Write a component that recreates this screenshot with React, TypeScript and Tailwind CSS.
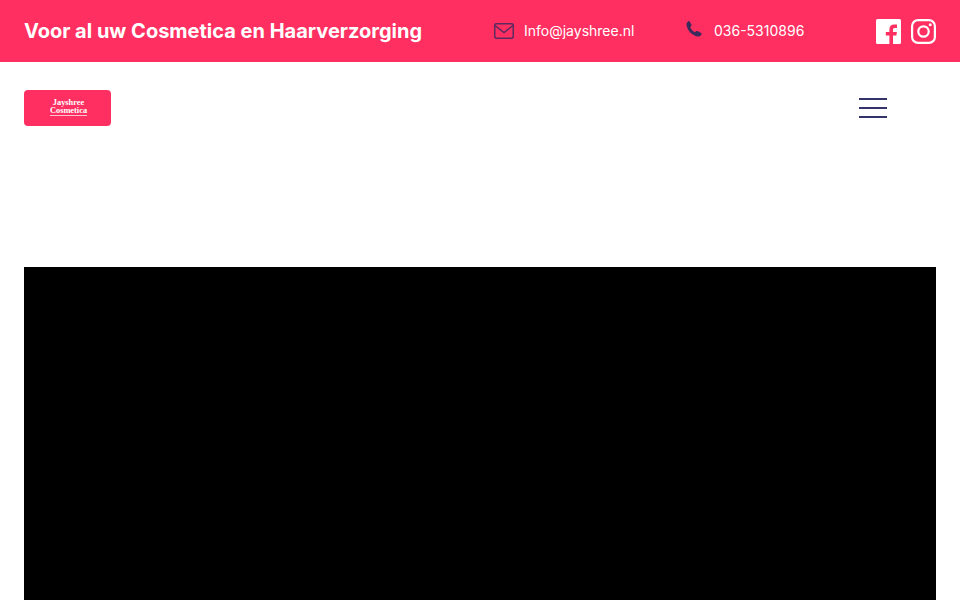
function MailIcon() {
  return (
    <svg width="20" height="16" viewBox="0 0 20 16" fill="none" stroke="#5a2a60" strokeWidth="1.5">
      <rect x="0.75" y="0.75" width="18.5" height="14.5" rx="1.5" />
      <path d="M1 2.5 L10 9.5 L19 2.5" />
    </svg>
  );
}

function PhoneIcon() {
  return (
    <svg className="-mt-1" width="16" height="16" viewBox="0 0 16 16" fill="#3b2a5c">
      <path d="M3.6 0.4 L5.4 3.6 C5.7 4.2 5.6 4.7 5.2 5.1 L4.3 6 C4.9 8.1 6.6 10.2 8.9 11.3 L10 10.3 C10.4 9.9 11 9.9 11.5 10.1 L15.1 11.9 C15.6 12.2 15.8 12.7 15.5 13.2 C14.9 14.6 13.6 15.6 12.2 15.6 C6.5 15 1.3 9.5 0.5 4 C0.3 2.4 1.2 1 2.4 0.3 C2.9 0 3.3 0 3.6 0.4 Z" />
    </svg>
  );
}

function FacebookIcon() {
  return (
    <svg width="25" height="25" viewBox="0 0 25 25">
      <rect width="25" height="25" rx="1.5" fill="#ffffff" />
      <path
        d="M17 25 V16.6 H20.4 L20.9 13 H17 V10.8 C17 9.6 17.4 8.9 18.8 8.9 H21 V5.6 C20.5 5.5 19.4 5.4 18.1 5.4 C15.2 5.4 13.4 7.1 13.4 10.2 V13 H9.8 V16.6 H13.4 V25 Z"
        fill="#ff2f61"
      />
    </svg>
  );
}

function InstagramIcon() {
  return (
    <svg width="25" height="25" viewBox="0 0 25 25" fill="none" stroke="#ffffff" strokeWidth="2.2">
      <rect x="1.1" y="1.1" width="22.8" height="22.8" rx="6" />
      <circle cx="12.5" cy="12.5" r="5.2" />
      <circle cx="19.2" cy="5.8" r="1.5" fill="#ffffff" stroke="none" />
    </svg>
  );
}

export default function App() {
  return (
    <div className="h-screen overflow-hidden bg-white font-['Inter',sans-serif]">
      {/* Top bar */}
      <div className="flex h-[62px] items-center bg-[#ff2f61] pl-6 pr-6 text-white">
        <h1 className="w-[470px] text-[20px] font-bold leading-none">
          Voor al uw Cosmetica en Haarverzorging
        </h1>
        <div className="flex w-[192px] items-center gap-2.5 text-sm">
          <MailIcon />
          <span>Info@jayshree.nl</span>
        </div>
        <div className="flex w-[190px] items-center gap-3 text-sm">
          <PhoneIcon />
          <span>036-5310896</span>
        </div>
        <div className="flex items-center gap-2.5">
          <FacebookIcon />
          <InstagramIcon />
        </div>
      </div>

      {/* Logo and menu */}
      <div className="flex h-[205px] items-start justify-between pl-6 pr-[73px] pt-7">
        <div className="flex h-9 w-[87px] items-center justify-center rounded-sm bg-[#ff2f61] text-center font-['Liberation_Serif',serif] text-[8.4px] font-bold leading-[8px] text-white">
          <div className="ml-0.5 -mt-px">
            <div>Jayshree</div>
            <div className="border-b border-white/70">Cosmetica</div>
          </div>
        </div>
        <button type="button" className="mt-2 flex w-7 flex-col gap-[7.5px]" aria-label="Menu">
          <span className="h-[1.5px] w-full bg-[#34346a]" />
          <span className="h-[1.5px] w-full bg-[#34346a]" />
          <span className="h-[1.5px] w-full bg-[#34346a]" />
        </button>
      </div>

      {/* Video */}
      <div className="px-6">
        <div className="h-[480px] bg-black" />
      </div>
    </div>
  );
}
